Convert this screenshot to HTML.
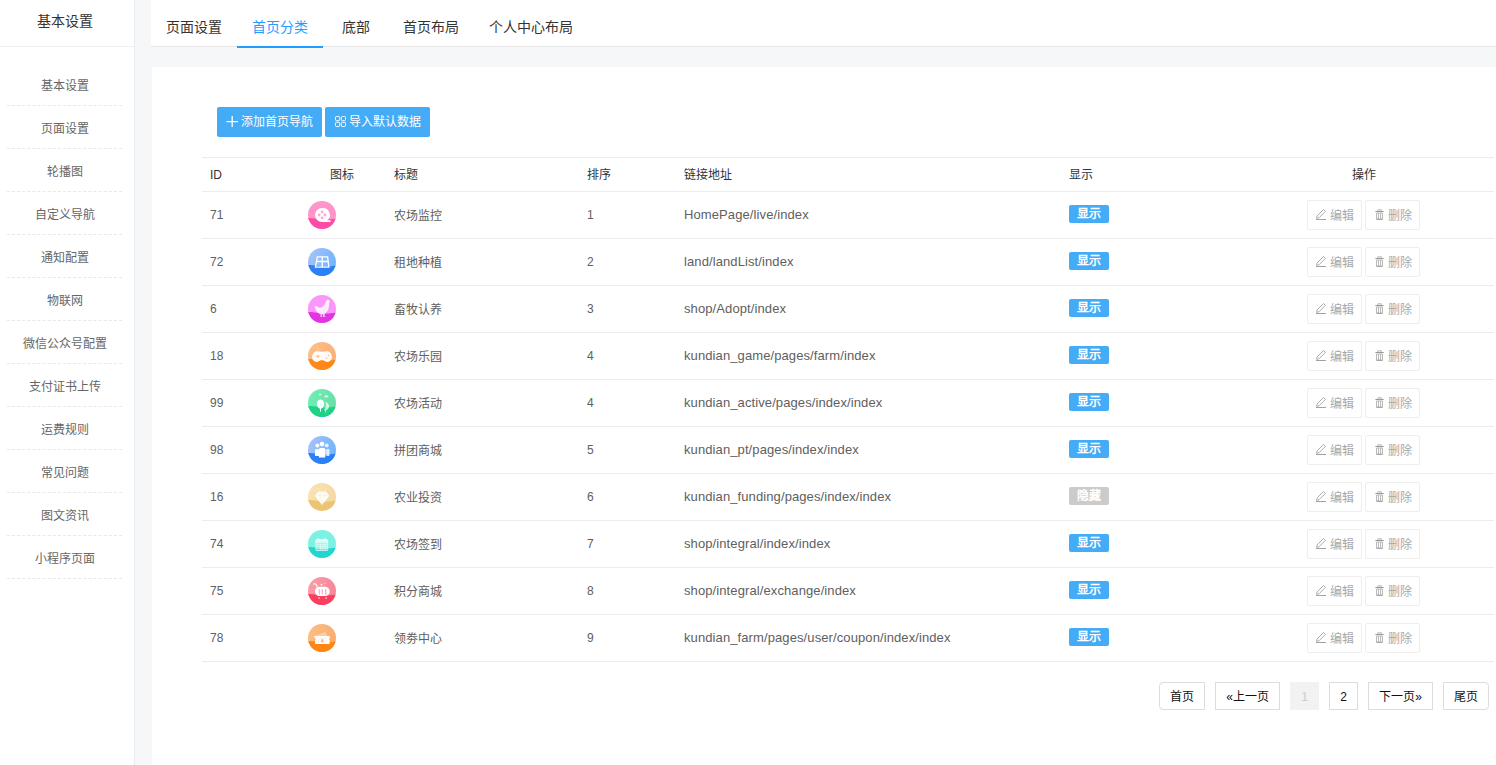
<!DOCTYPE html>
<html lang="zh-CN">
<head>
<meta charset="utf-8">
<title>首页分类</title>
<style>
*{box-sizing:border-box;}
html,body{margin:0;padding:0;}
body{width:1496px;height:765px;overflow:hidden;position:relative;background:#f5f7f9;font-family:"Liberation Sans", sans-serif;font-size:12px;color:#666;}
.side{position:absolute;left:0;top:0;width:135px;height:765px;background:#fff;border-right:1px solid #ebeced;}
.side h1{margin:0;width:129px;height:47px;line-height:42px;font-size:14px;font-weight:normal;color:#333;text-align:center;}
.side .hl{position:absolute;left:0;top:46px;width:134px;height:1px;background:#f0f0f0;}
.side ul{list-style:none;margin:16px 0 0 7px;padding:0;width:115px;}
.side li{white-space:nowrap;overflow:hidden;height:43px;line-height:47px;border-bottom:1px dashed #e8e8e8;text-align:center;color:#666;font-size:12px;}
.tabs{position:absolute;left:151px;top:0;right:0;height:47px;background:#fff;border-bottom:1px solid #e6e6e6;}
.tabs ul{list-style:none;margin:0;padding:7px 0 0 0;display:flex;}
.tabs li{flex:none;overflow:hidden;padding:0;height:42px;line-height:40px;font-size:14px;color:#333;text-align:center;position:relative;white-space:nowrap;}
.tabs li.on{color:#1e9fff;}
.tabs li.on:after{content:"";position:absolute;left:0;right:0;top:39px;height:2px;background:#1e9fff;}
.panel{position:absolute;left:152px;top:67px;right:0;bottom:0;background:#fff;}
.tb{overflow:hidden;position:absolute;top:107px;height:30px;width:105px;background:#44abf7;border-radius:2px;color:#fff;font-size:12px;line-height:30px;white-space:nowrap;padding-left:9px;}
.tb .ti{vertical-align:top;margin:9px 3px 0 0;}
table{position:absolute;left:202px;top:157px;width:1292px;border-collapse:separate;border-spacing:0;table-layout:fixed;}
th,td{padding:0 8px;text-align:left;font-weight:normal;font-size:12px;white-space:nowrap;overflow:hidden;}
th{height:35px;padding-bottom:2px;border-top:1px solid #ececec;border-bottom:1px solid #ececec;color:#333;}
td{height:47px;border-bottom:1px solid #ececec;color:#606060;vertical-align:middle;}
.c{text-align:center;}
.ico{display:block;margin-left:2px;}
.lnk{font-size:13px;letter-spacing:.1px;padding-bottom:2px;}
.z{padding-bottom:2px;}
.num{font-size:12px;}
.lb{white-space:nowrap;overflow:hidden;vertical-align:middle;display:inline-block;width:40px;height:18px;line-height:18px;border-radius:2px;background:#44abf7;color:#fff;font-weight:bold;text-align:center;font-size:12px;position:relative;top:-1px;}
.lb.off{background:#cbcbcb;}
.btn{white-space:nowrap;overflow:hidden;display:inline-block;width:55px;height:30px;line-height:30px;border:1px solid #eee;border-radius:2px;color:#a8a8a8;font-size:12px;text-align:left;padding-left:8px;vertical-align:middle;background:#fff;}
.btn+.btn{margin-left:3px;}
.btn .bi{vertical-align:top;margin:8px 4px 0 0;}
.pg{white-space:nowrap;overflow:hidden;position:absolute;top:682px;height:28px;line-height:28px;border:1px solid #ddd;background:#fff;color:#111;text-align:center;font-size:12px;}
.pg.cur{background:#f2f2f2;border-color:#f2f2f2;color:#ccc;}
</style>
</head>
<body>
<div class="side"><h1>基本设置</h1><div class="hl"></div><ul>
<li>基本设置</li>
<li>页面设置</li>
<li>轮播图</li>
<li>自定义导航</li>
<li>通知配置</li>
<li>物联网</li>
<li>微信公众号配置</li>
<li>支付证书上传</li>
<li>运费规则</li>
<li>常见问题</li>
<li>图文资讯</li>
<li>小程序页面</li>
</ul></div>
<div class="tabs"><ul><li style="width:86px">页面设置</li><li class="on" style="width:86px">首页分类</li><li style="width:65px">底部</li><li style="width:86px">首页布局</li><li style="width:114px">个人中心布局</li></ul></div>
<div class="panel"></div>
<div class="tb" style="left:217px"><svg class="ti" width="12" height="12" viewBox="0 0 12 12"><path d="M6.200 0v11" stroke="#fff" stroke-width="1.300"/><path d="M.5 5.600h11.500" stroke="#fff" stroke-width="1.100"/></svg>添加首页导航</div>
<div class="tb" style="left:325px"><svg class="ti" width="12" height="12" viewBox="0 0 12 12"><g fill="none" stroke="#fff" stroke-width="1"><rect x="1.500" y=".5" width="4.200" height="4.200" rx="1"/><rect x="7.300" y=".5" width="4.200" height="4.200" rx="1"/><rect x="1.500" y="6.300" width="4.200" height="4.200" rx="1"/><rect x="7.300" y="6.300" width="4.200" height="4.200" rx="1"/></g></svg>导入默认数据</div>
<table><colgroup><col style="width:96px"><col style="width:88px"><col style="width:193px"><col style="width:97px"><col style="width:385px"><col style="width:172px"><col style="width:261px"></colgroup>
<thead><tr><th style="padding-bottom:0">ID</th><th class="c">图标</th><th>标题</th><th>排序</th><th>链接地址</th><th>显示</th><th class="c">操作</th></tr></thead>
<tbody>
<tr><td class="num">71</td><td><svg class="ico" width="28" height="28" viewBox="0 0 28 28"><defs><clipPath id="c1"><circle cx="14" cy="14" r="14"/></clipPath></defs><g clip-path="url(#c1)"><rect width="28" height="28" fill="#ff95c9"/><path d="M0 17 C6 16.700 11 18.800 17 18.700 S25 17.600 28 17.800 V28 H0Z" fill="#ff4ba6"/></g><path d="M14 7.100a6.900 6.900 0 1 0 0 13.800h8.100a0.800 0.800 0 0 0 0-1.600h-2.900A6.900 6.900 0 0 0 14 7.100z" fill="#fff"/><g fill="#ffa6d2"><circle cx="14.100" cy="11" r="1.400"/><circle cx="11.200" cy="13.900" r="1.400"/><circle cx="17" cy="13.900" r="1.400"/><circle cx="14.100" cy="16.800" r="1.400"/></g></svg></td><td class="z">农场监控</td><td class="num">1</td><td class="lnk">HomePage/live/index</td><td><span class="lb">显示</span></td><td class="c"><span class="btn"><svg class="bi" width="10" height="12" viewBox="0 0 10 12"><path d="M7.500 .5l1.900 1.900-6.400 6.400-2.400.5.500-2.400z" fill="none" stroke="#a3a3a3" stroke-width=".9" stroke-linejoin="round"/><path d="M0 10.500h10" stroke="#a3a3a3" stroke-width="1"/></svg>编辑</span><span class="btn"><svg class="bi" width="10" height="12" viewBox="0 0 10 12"><path d="M3.900 2.200v-1.400h3.400v1.400" fill="none" stroke="#ababab" stroke-width=".9" stroke-linejoin="round"/><path d="M1.400 2.500h8.300" stroke="#999" stroke-width="1"/><path d="M2.600 4v6.300h5.800V4z" fill="none" stroke="#ababab" stroke-width=".9"/><path d="M4.500 4.300v5.700M6.500 4.300v5.700" stroke="#b4b4b4" stroke-width=".9"/><path d="M2.600 10.300h5.800" stroke="#a0a0a0" stroke-width="1"/></svg>删除</span></td></tr>
<tr><td class="num">72</td><td><svg class="ico" width="28" height="28" viewBox="0 0 28 28"><defs><linearGradient id="g2" x1="0" y1="0" x2="1" y2="0.3"><stop offset="0" stop-color="#a9c3fb"/><stop offset="1" stop-color="#74b6fb"/></linearGradient><clipPath id="c2"><circle cx="14" cy="14" r="14"/></clipPath></defs><g clip-path="url(#c2)"><rect width="28" height="28" fill="url(#g2)"/><path d="M0 17 C6 16.700 11 18.800 17 18.700 S25 17.600 28 17.800 V28 H0Z" fill="#2b80f5"/></g><path d="M9.300 8.800H19.600L20.900 19.200H7.500Z M14.200 8.800V19.200 M8.400 13.500H20.200" fill="none" stroke="#fff" stroke-width="1.300" stroke-linejoin="miter"/></svg></td><td class="z">租地种植</td><td class="num">2</td><td class="lnk">land/landList/index</td><td><span class="lb">显示</span></td><td class="c"><span class="btn"><svg class="bi" width="10" height="12" viewBox="0 0 10 12"><path d="M7.500 .5l1.900 1.900-6.400 6.400-2.400.5.500-2.400z" fill="none" stroke="#a3a3a3" stroke-width=".9" stroke-linejoin="round"/><path d="M0 10.500h10" stroke="#a3a3a3" stroke-width="1"/></svg>编辑</span><span class="btn"><svg class="bi" width="10" height="12" viewBox="0 0 10 12"><path d="M3.900 2.200v-1.400h3.400v1.400" fill="none" stroke="#ababab" stroke-width=".9" stroke-linejoin="round"/><path d="M1.400 2.500h8.300" stroke="#999" stroke-width="1"/><path d="M2.600 4v6.300h5.800V4z" fill="none" stroke="#ababab" stroke-width=".9"/><path d="M4.500 4.300v5.700M6.500 4.300v5.700" stroke="#b4b4b4" stroke-width=".9"/><path d="M2.600 10.300h5.800" stroke="#a0a0a0" stroke-width="1"/></svg>删除</span></td></tr>
<tr><td class="num">6</td><td><svg class="ico" width="28" height="28" viewBox="0 0 28 28"><defs><clipPath id="c3"><circle cx="14" cy="14" r="14"/></clipPath></defs><g clip-path="url(#c3)"><rect width="28" height="28" fill="#fb96fb"/><path d="M0 17 C6 16.700 11 18.800 17 18.700 S25 17.600 28 17.800 V28 H0Z" fill="#e334e3"/></g><defs><linearGradient id="ch" x1="0" y1="0" x2=".3" y2="1"><stop offset="0" stop-color="#fff" stop-opacity=".98"/><stop offset="1" stop-color="#fff" stop-opacity=".72"/></linearGradient></defs><path d="M6.300 11.600c1-.9 2.300-.7 3.300.1 1.200 1 2.700 1.300 4.300.5 1.800-.9 3-2.600 3.600-4.600l.5-1.300c.2-.9.800-1.300 1.300-1.100.3-.5 1-.5 1.300 0 .6-.1 1 .4.800 1 .4.200.5.700.2 1.100-.3.200-.5.500-.5.900.1 2.600-.2 5.200-1.400 7.400-.7 1.400-1.800 2.500-3.100 3.200v2.600l1.700.7h-3.300v-2.700c-.4.1-.8.1-1.200.1v1.900l1.200.7h-3.400l1-.7v-2.200c-2.300-.7-4.300-2.600-5.200-5.200-.3-.9-.4-1.800-.7-2.500z" fill="url(#ch)"/></svg></td><td class="z">畜牧认养</td><td class="num">3</td><td class="lnk">shop/Adopt/index</td><td><span class="lb">显示</span></td><td class="c"><span class="btn"><svg class="bi" width="10" height="12" viewBox="0 0 10 12"><path d="M7.500 .5l1.900 1.900-6.400 6.400-2.400.5.500-2.400z" fill="none" stroke="#a3a3a3" stroke-width=".9" stroke-linejoin="round"/><path d="M0 10.500h10" stroke="#a3a3a3" stroke-width="1"/></svg>编辑</span><span class="btn"><svg class="bi" width="10" height="12" viewBox="0 0 10 12"><path d="M3.900 2.200v-1.400h3.400v1.400" fill="none" stroke="#ababab" stroke-width=".9" stroke-linejoin="round"/><path d="M1.400 2.500h8.300" stroke="#999" stroke-width="1"/><path d="M2.600 4v6.300h5.800V4z" fill="none" stroke="#ababab" stroke-width=".9"/><path d="M4.500 4.300v5.700M6.500 4.300v5.700" stroke="#b4b4b4" stroke-width=".9"/><path d="M2.600 10.300h5.800" stroke="#a0a0a0" stroke-width="1"/></svg>删除</span></td></tr>
<tr><td class="num">18</td><td><svg class="ico" width="28" height="28" viewBox="0 0 28 28"><defs><linearGradient id="g4" x1="0" y1="0" x2="1" y2="0.3"><stop offset="0" stop-color="#fdc08b"/><stop offset="1" stop-color="#fab176"/></linearGradient><clipPath id="c4"><circle cx="14" cy="14" r="14"/></clipPath></defs><g clip-path="url(#c4)"><rect width="28" height="28" fill="url(#g4)"/><path d="M0 17 C6 16.700 11 18.800 17 18.700 S25 17.600 28 17.800 V28 H0Z" fill="#ff881b"/></g><path d="M9.3 5.2c.2 1.200.9 2.100 2.200 2.600" fill="none" stroke="#fff" stroke-opacity=".55" stroke-width=".7"/><path d="M7.600 9.600c1.600-.600 3.600-.300 5.300.100.800.200 1.600.200 2.400 0 1.700-.400 3.700-.700 5.300-.100 2.100.800 3.300 3.300 3.300 5.500 0 2.300-1.300 4.200-3.300 4.700-1.800.400-3.400-.200-4.600-1.200-.600-.500-1.300-.800-2-.800s-1.400.300-2 .800c-1.200 1-2.800 1.600-4.600 1.200-2-.500-3.300-2.400-3.300-4.700 0-2.200 1.200-4.700 3.500-5.500z" fill="#fff" fill-opacity=".95"/><path d="M8.300 14.300h3.200M9.900 12.900v2.900" stroke="#fdb777" stroke-width="1.100" fill="none"/><circle cx="20.400" cy="13.600" r=".8" fill="#fdb777"/><circle cx="18.500" cy="16.300" r=".8" fill="#fdb777"/></svg></td><td class="z">农场乐园</td><td class="num">4</td><td class="lnk">kundian_game/pages/farm/index</td><td><span class="lb">显示</span></td><td class="c"><span class="btn"><svg class="bi" width="10" height="12" viewBox="0 0 10 12"><path d="M7.500 .5l1.900 1.900-6.400 6.400-2.400.5.500-2.400z" fill="none" stroke="#a3a3a3" stroke-width=".9" stroke-linejoin="round"/><path d="M0 10.500h10" stroke="#a3a3a3" stroke-width="1"/></svg>编辑</span><span class="btn"><svg class="bi" width="10" height="12" viewBox="0 0 10 12"><path d="M3.900 2.200v-1.400h3.400v1.400" fill="none" stroke="#ababab" stroke-width=".9" stroke-linejoin="round"/><path d="M1.400 2.500h8.300" stroke="#999" stroke-width="1"/><path d="M2.600 4v6.300h5.800V4z" fill="none" stroke="#ababab" stroke-width=".9"/><path d="M4.500 4.300v5.700M6.500 4.300v5.700" stroke="#b4b4b4" stroke-width=".9"/><path d="M2.600 10.300h5.800" stroke="#a0a0a0" stroke-width="1"/></svg>删除</span></td></tr>
<tr><td class="num">99</td><td><svg class="ico" width="28" height="28" viewBox="0 0 28 28"><defs><linearGradient id="g5" x1="0" y1="0" x2="1" y2="0.3"><stop offset="0" stop-color="#6df0b4"/><stop offset="1" stop-color="#69e0a8"/></linearGradient><clipPath id="c5"><circle cx="14" cy="14" r="14"/></clipPath></defs><g clip-path="url(#c5)"><rect width="28" height="28" fill="url(#g5)"/><path d="M0 17 C6 16.700 11 18.800 17 18.700 S25 17.600 28 17.800 V28 H0Z" fill="#1fd185"/></g><ellipse cx="12.100" cy="5.600" rx="1.300" ry=".8" fill="#fff" fill-opacity=".85"/><path d="M15.800 8.300c0-.6.500-1 1.100-.9.200-.8.900-1.300 1.700-1.200.8.100 1.400.700 1.500 1.500.4.100.6.300.6.600z" fill="#fff" fill-opacity=".9"/><path d="M17.300 12.900c2.200.2 3.800 2.100 3.800 4.300 0 1.900-1.300 3.600-3 4.200v2h-.9v-2c-.5-.1-.9-.3-1.300-.6 1.300-1.100 2.100-2.700 2.100-4.500 0-1.200-.3-2.400-.7-3.400z" fill="#fff" fill-opacity=".72"/><path d="M12.500 10.500c2.100 0 3.700 1.900 3.700 4.200 0 2.400-1.400 4.400-3.200 5v3h-1v-3c-1.800-.6-3.200-2.600-3.200-5 0-2.300 1.600-4.200 3.700-4.200z" fill="#fff" fill-opacity=".95"/></svg></td><td class="z">农场活动</td><td class="num">4</td><td class="lnk">kundian_active/pages/index/index</td><td><span class="lb">显示</span></td><td class="c"><span class="btn"><svg class="bi" width="10" height="12" viewBox="0 0 10 12"><path d="M7.500 .5l1.900 1.900-6.400 6.400-2.400.5.500-2.400z" fill="none" stroke="#a3a3a3" stroke-width=".9" stroke-linejoin="round"/><path d="M0 10.500h10" stroke="#a3a3a3" stroke-width="1"/></svg>编辑</span><span class="btn"><svg class="bi" width="10" height="12" viewBox="0 0 10 12"><path d="M3.900 2.200v-1.400h3.400v1.400" fill="none" stroke="#ababab" stroke-width=".9" stroke-linejoin="round"/><path d="M1.400 2.500h8.300" stroke="#999" stroke-width="1"/><path d="M2.600 4v6.300h5.800V4z" fill="none" stroke="#ababab" stroke-width=".9"/><path d="M4.500 4.300v5.700M6.500 4.300v5.700" stroke="#b4b4b4" stroke-width=".9"/><path d="M2.600 10.300h5.800" stroke="#a0a0a0" stroke-width="1"/></svg>删除</span></td></tr>
<tr><td class="num">98</td><td><svg class="ico" width="28" height="28" viewBox="0 0 28 28"><defs><linearGradient id="g6" x1="0" y1="0" x2="1" y2="0.3"><stop offset="0" stop-color="#a9c3fb"/><stop offset="1" stop-color="#74b6fb"/></linearGradient><clipPath id="c6"><circle cx="14" cy="14" r="14"/></clipPath></defs><g clip-path="url(#c6)"><rect width="28" height="28" fill="url(#g6)"/><path d="M0 17 C6 16.700 11 18.800 17 18.700 S25 17.600 28 17.800 V28 H0Z" fill="#2b80f5"/></g><circle cx="9.350" cy="9.400" r="2" fill="#fff"/><circle cx="18.750" cy="9.400" r="1.850" fill="#fff" fill-opacity=".85"/><rect x="17.100" y="13.400" width="1.300" height="6.400" fill="#fff" fill-opacity=".4"/><rect x="18.400" y="13.100" width="3" height="6.800" rx=".6" fill="#fff" fill-opacity=".8"/><rect x="7" y="13.300" width="4.600" height="6.600" rx=".6" fill="#fff"/><circle cx="14.050" cy="8.100" r="2.350" fill="#fff"/><path d="M10.900 13.700c0-1 .7-1.700 1.700-1.700h2.900c1 0 1.700.7 1.700 1.700v7.750h-6.300z" fill="#fff"/></svg></td><td class="z">拼团商城</td><td class="num">5</td><td class="lnk">kundian_pt/pages/index/index</td><td><span class="lb">显示</span></td><td class="c"><span class="btn"><svg class="bi" width="10" height="12" viewBox="0 0 10 12"><path d="M7.500 .5l1.900 1.900-6.400 6.400-2.400.5.500-2.400z" fill="none" stroke="#a3a3a3" stroke-width=".9" stroke-linejoin="round"/><path d="M0 10.500h10" stroke="#a3a3a3" stroke-width="1"/></svg>编辑</span><span class="btn"><svg class="bi" width="10" height="12" viewBox="0 0 10 12"><path d="M3.900 2.200v-1.400h3.400v1.400" fill="none" stroke="#ababab" stroke-width=".9" stroke-linejoin="round"/><path d="M1.400 2.500h8.300" stroke="#999" stroke-width="1"/><path d="M2.600 4v6.300h5.800V4z" fill="none" stroke="#ababab" stroke-width=".9"/><path d="M4.500 4.300v5.700M6.500 4.300v5.700" stroke="#b4b4b4" stroke-width=".9"/><path d="M2.600 10.300h5.800" stroke="#a0a0a0" stroke-width="1"/></svg>删除</span></td></tr>
<tr><td class="num">16</td><td><svg class="ico" width="28" height="28" viewBox="0 0 28 28"><defs><linearGradient id="g7" x1="0" y1="0" x2="1" y2="0.3"><stop offset="0" stop-color="#f9e4b1"/><stop offset="1" stop-color="#f6d9a5"/></linearGradient><clipPath id="c7"><circle cx="14" cy="14" r="14"/></clipPath></defs><g clip-path="url(#c7)"><rect width="28" height="28" fill="url(#g7)"/><path d="M0 17 C6 16.700 11 18.800 17 18.700 S25 17.600 28 17.800 V28 H0Z" fill="#ebc476"/></g><g fill="#fff" fill-opacity=".6"><circle cx="6.500" cy="7.500" r=".5"/><circle cx="10.300" cy="5.500" r=".5"/><circle cx="17.600" cy="5.300" r=".5"/><circle cx="22.300" cy="8.300" r=".5"/></g><path d="M10.200 8.400h7.800l3.300 4.300-7.300 9.300-7.100-9.300z" fill="#fff" fill-opacity=".96"/><path d="M7.300 12.800h13.800M10.300 8.700l1.500 4.100 2.300 8.700 2.300-8.700 1.500-4.100M14.100 8.600l-2.300 4.200M14.100 8.600l2.300 4.200" stroke="#f8e3b6" stroke-width=".4" fill="none"/></svg></td><td class="z">农业投资</td><td class="num">6</td><td class="lnk">kundian_funding/pages/index/index</td><td><span class="lb off">隐藏</span></td><td class="c"><span class="btn"><svg class="bi" width="10" height="12" viewBox="0 0 10 12"><path d="M7.500 .5l1.900 1.900-6.400 6.400-2.400.5.500-2.400z" fill="none" stroke="#a3a3a3" stroke-width=".9" stroke-linejoin="round"/><path d="M0 10.500h10" stroke="#a3a3a3" stroke-width="1"/></svg>编辑</span><span class="btn"><svg class="bi" width="10" height="12" viewBox="0 0 10 12"><path d="M3.900 2.200v-1.400h3.400v1.400" fill="none" stroke="#ababab" stroke-width=".9" stroke-linejoin="round"/><path d="M1.400 2.500h8.300" stroke="#999" stroke-width="1"/><path d="M2.600 4v6.300h5.800V4z" fill="none" stroke="#ababab" stroke-width=".9"/><path d="M4.500 4.300v5.700M6.500 4.300v5.700" stroke="#b4b4b4" stroke-width=".9"/><path d="M2.600 10.300h5.800" stroke="#a0a0a0" stroke-width="1"/></svg>删除</span></td></tr>
<tr><td class="num">74</td><td><svg class="ico" width="28" height="28" viewBox="0 0 28 28"><defs><clipPath id="c8"><circle cx="14" cy="14" r="14"/></clipPath></defs><g clip-path="url(#c8)"><rect width="28" height="28" fill="#7ff1e3"/><path d="M0 17 C6 16.700 11 18.800 17 18.700 S25 17.600 28 17.800 V28 H0Z" fill="#22d6d0"/></g><rect x="7.900" y="9.700" width="11.800" height="10.800" rx=".8" fill="#fff" fill-opacity=".28" stroke="#fff" stroke-opacity=".85" stroke-width=".8"/><path d="M7.500 10.500c0-.6.400-1 1-1h10.600c.6 0 1 .4 1 1v2.200h-12.600z" fill="#fff" fill-opacity=".62"/><path d="M10.100 8.500v2.200M17.200 8.500v2.200" stroke="#fff" stroke-width="1.100" stroke-linecap="round"/><path d="M12.500 13.600v6.200M15.100 13.600v6.200M17.700 13.600v6.200M9 14.700h9.800M9 16.750h9.800M9 18.600h9.800" stroke="#fff" stroke-opacity=".75" stroke-width=".6" fill="none"/></svg></td><td class="z">农场签到</td><td class="num">7</td><td class="lnk">shop/integral/index/index</td><td><span class="lb">显示</span></td><td class="c"><span class="btn"><svg class="bi" width="10" height="12" viewBox="0 0 10 12"><path d="M7.500 .5l1.900 1.900-6.400 6.400-2.400.5.500-2.400z" fill="none" stroke="#a3a3a3" stroke-width=".9" stroke-linejoin="round"/><path d="M0 10.500h10" stroke="#a3a3a3" stroke-width="1"/></svg>编辑</span><span class="btn"><svg class="bi" width="10" height="12" viewBox="0 0 10 12"><path d="M3.900 2.200v-1.400h3.400v1.400" fill="none" stroke="#ababab" stroke-width=".9" stroke-linejoin="round"/><path d="M1.400 2.500h8.300" stroke="#999" stroke-width="1"/><path d="M2.600 4v6.300h5.800V4z" fill="none" stroke="#ababab" stroke-width=".9"/><path d="M4.500 4.300v5.700M6.500 4.300v5.700" stroke="#b4b4b4" stroke-width=".9"/><path d="M2.600 10.300h5.800" stroke="#a0a0a0" stroke-width="1"/></svg>删除</span></td></tr>
<tr><td class="num">75</td><td><svg class="ico" width="28" height="28" viewBox="0 0 28 28"><defs><linearGradient id="g9" x1="0" y1="0" x2="1" y2="0.3"><stop offset="0" stop-color="#fb9da8"/><stop offset="1" stop-color="#f6889a"/></linearGradient><clipPath id="c9"><circle cx="14" cy="14" r="14"/></clipPath></defs><g clip-path="url(#c9)"><rect width="28" height="28" fill="url(#g9)"/><path d="M0 17 C6 16.700 11 18.800 17 18.700 S25 17.600 28 17.800 V28 H0Z" fill="#fa3f5e"/></g><path d="M5.700 7.100c.9-.5 1.900-.3 2.400.3l1 2.300" fill="none" stroke="#fff" stroke-width="1.200" stroke-linecap="round"/><circle cx="13.500" cy="7.700" r=".9" fill="#fff"/><path d="M16.300 6.600h1.600" stroke="#fff" stroke-opacity=".7" stroke-width=".7"/><rect x="6.900" y="9.800" width="14.800" height="9.300" rx="4.650" fill="#fff"/><path d="M11.300 12.200v5.300M14.300 12.200v5.300" stroke="#fb8d9b" stroke-width=".8"/><path d="M17.700 12v5.800" stroke="#fbb5be" stroke-width="1.400"/><rect x="10.300" y="20.300" width="1.400" height="1.500" fill="#fff" fill-opacity=".75"/><rect x="17.400" y="20.300" width="1.400" height="1.500" fill="#fff" fill-opacity=".75"/></svg></td><td class="z">积分商城</td><td class="num">8</td><td class="lnk">shop/integral/exchange/index</td><td><span class="lb">显示</span></td><td class="c"><span class="btn"><svg class="bi" width="10" height="12" viewBox="0 0 10 12"><path d="M7.500 .5l1.900 1.900-6.400 6.400-2.400.5.500-2.400z" fill="none" stroke="#a3a3a3" stroke-width=".9" stroke-linejoin="round"/><path d="M0 10.500h10" stroke="#a3a3a3" stroke-width="1"/></svg>编辑</span><span class="btn"><svg class="bi" width="10" height="12" viewBox="0 0 10 12"><path d="M3.900 2.200v-1.400h3.400v1.400" fill="none" stroke="#ababab" stroke-width=".9" stroke-linejoin="round"/><path d="M1.400 2.500h8.300" stroke="#999" stroke-width="1"/><path d="M2.600 4v6.300h5.800V4z" fill="none" stroke="#ababab" stroke-width=".9"/><path d="M4.500 4.300v5.700M6.500 4.300v5.700" stroke="#b4b4b4" stroke-width=".9"/><path d="M2.600 10.300h5.800" stroke="#a0a0a0" stroke-width="1"/></svg>删除</span></td></tr>
<tr><td class="num">78</td><td><svg class="ico" width="28" height="28" viewBox="0 0 28 28"><defs><linearGradient id="g10" x1="0" y1="0" x2="1" y2="0.3"><stop offset="0" stop-color="#fdbf88"/><stop offset="1" stop-color="#f9ad6c"/></linearGradient><clipPath id="c10"><circle cx="14" cy="14" r="14"/></clipPath></defs><g clip-path="url(#c10)"><rect width="28" height="28" fill="url(#g10)"/><path d="M0 17 C6 16.700 11 18.800 17 18.700 S25 17.600 28 17.800 V28 H0Z" fill="#ff8514"/></g><path d="M6.400 12.100l11.400-4.300 1 2.600v1.700z" fill="#fff" fill-opacity=".32"/><path d="M5.300 12H21.600V14.900A.7 .7 0 0 0 21.600 16.300V20.100H7.200V16.300A.7 .7 0 0 0 7.200 14.900V13.700Z" fill="#fff"/><path d="M10.600 13.800v5.400M18 13.800v5.400" stroke="#fdc898" stroke-width=".6" stroke-dasharray="1 .7"/><path d="M13 14.500l1.300 1.300 1.300-1.300M12.800 16.200h3M12.800 17.500h3M14.300 15.900v3" stroke="#fda85a" stroke-width=".7" fill="none"/></svg></td><td class="z">领劵中心</td><td class="num">9</td><td class="lnk">kundian_farm/pages/user/coupon/index/index</td><td><span class="lb">显示</span></td><td class="c"><span class="btn"><svg class="bi" width="10" height="12" viewBox="0 0 10 12"><path d="M7.500 .5l1.900 1.900-6.400 6.400-2.400.5.500-2.400z" fill="none" stroke="#a3a3a3" stroke-width=".9" stroke-linejoin="round"/><path d="M0 10.500h10" stroke="#a3a3a3" stroke-width="1"/></svg>编辑</span><span class="btn"><svg class="bi" width="10" height="12" viewBox="0 0 10 12"><path d="M3.900 2.200v-1.400h3.400v1.400" fill="none" stroke="#ababab" stroke-width=".9" stroke-linejoin="round"/><path d="M1.400 2.500h8.300" stroke="#999" stroke-width="1"/><path d="M2.600 4v6.300h5.800V4z" fill="none" stroke="#ababab" stroke-width=".9"/><path d="M4.500 4.300v5.700M6.500 4.300v5.700" stroke="#b4b4b4" stroke-width=".9"/><path d="M2.600 10.300h5.800" stroke="#a0a0a0" stroke-width="1"/></svg>删除</span></td></tr>
</tbody></table>
<div class="pg" style="left:1159px;width:46px;border-radius:4px 0 0 4px">首页</div>
<div class="pg" style="left:1215px;width:65px;">«上一页</div>
<div class="pg cur" style="left:1290px;width:29px;">1</div>
<div class="pg" style="left:1329px;width:29px;">2</div>
<div class="pg" style="left:1368px;width:65px;">下一页»</div>
<div class="pg" style="left:1443px;width:46px;border-radius:0 4px 4px 0">尾页</div>
</body>
</html>
